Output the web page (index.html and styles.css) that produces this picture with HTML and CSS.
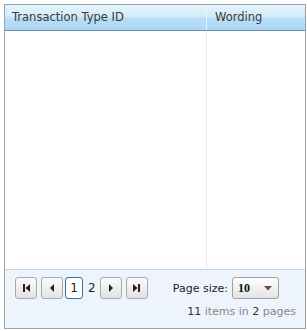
FILE: index.html
```html
<!DOCTYPE html>
<html lang="en">
<head>
  <meta charset="UTF-8" />
  <title>Transaction Types</title>
  <link rel="stylesheet" href="styles.css">
</head>
<body>
  <div class="grid">
    <div class="grid-header">
      <div class="col col-id">Transaction Type ID</div>
      <div class="col col-wording">Wording</div>
    </div>

    <div class="grid-body">
      <div class="col-fill col-id"></div>
      <div class="col-fill col-wording"></div>
    </div>

    <div class="pager">
      <div class="pager-row">
        <div class="pager-nav">
          <span class="pbtn">
            <svg width="9" height="10" viewBox="0 0 9 10"><rect x="1" y="1" width="2" height="8" fill="#222"/><path d="M8 1 L3.5 5 L8 9 Z" fill="#222"/></svg>
          </span>
          <span class="pbtn">
            <svg width="9" height="10" viewBox="0 0 9 10"><path d="M6 1 L2 5 L6 9 Z" fill="#222"/></svg>
          </span>
          <span class="pnum current">1</span>
          <span class="pnum">2</span>
          <span class="pbtn">
            <svg width="9" height="10" viewBox="0 0 9 10"><path d="M3 1 L7 5 L3 9 Z" fill="#222"/></svg>
          </span>
          <span class="pbtn">
            <svg width="9" height="10" viewBox="0 0 9 10"><path d="M1 1 L5.5 5 L1 9 Z" fill="#222"/><rect x="6" y="1" width="2" height="8" fill="#222"/></svg>
          </span>
        </div>
        <div class="page-size">
          <span>Page size:</span>
          <span class="dropdown">
            <span class="dd-value">10</span>
            <svg width="8" height="5" viewBox="0 0 8 5"><path d="M0 0 L8 0 L4 4.5 Z" fill="#555"/></svg>
          </span>
        </div>
      </div>
      <div class="pager-info"><b>11</b> items in <b>2</b> pages</div>
    </div>
  </div>
</body>
</html>
```

FILE: styles.css
```css
body {
  margin: 0;
  padding: 4px;
  font-family: 'DejaVu Sans', Verdana, sans-serif;
  font-size: 11px;
  color: #333;
  background: #fff;
}

.grid {
  width: 300px;
  height: 323px;
  border: 1px solid #97a4ad;
  display: flex;
  flex-direction: column;
}

.grid-header {
  display: flex;
  height: 25px;
  background: linear-gradient(to bottom, #e6f3fc 0%, #d3ebfa 45%, #b9def6 55%, #acd7f4 100%);
  border-bottom: 1px solid #6b8faa;
}

.col {
  line-height: 25px;
  padding-left: 8px;
  font-size: 11.5px;
  color: #3a3a3a;
}

.col-id {
  width: 202px;
  box-sizing: border-box;
}

.col-wording {
  flex: 1;
}

.grid-header .col-id {
  border-right: 1px solid #e9f4fc;
  padding-left: 7px;
}

.grid-body {
  display: flex;
  height: 238px;
  background: #fff;
}

.grid-body .col-id {
  border-right: 1px solid #ececec;
}

.pager {
  flex: 1;
  background: #eef4fb;
  border-top: 1px solid #c5d7e6;
  padding: 7px 11px 0 10px;
}

.pager-row {
  display: flex;
  align-items: center;
}

.pager-nav {
  display: flex;
  align-items: center;
  gap: 4px;
}

.pbtn {
  width: 20px;
  height: 20px;
  border: 1px solid #a9a9a9;
  border-radius: 3px;
  background: linear-gradient(to bottom, #fbfbfb, #e2e2e2);
  display: flex;
  align-items: center;
  justify-content: center;
}

.pnum {
  font-size: 12px;
  color: #222;
  line-height: 20px;
}

.pnum.current {
  box-sizing: border-box;
  width: 18px;
  height: 22px;
  border: 1px solid #3a6f9c;
  border-radius: 3px;
  background: #fff;
  text-align: center;
  margin-left: -2px;
}

.pager-nav .pnum + .pnum {
  margin-left: 1px;
  margin-right: 0;
}

.page-size {
  margin-left: auto;
  display: flex;
  align-items: center;
  gap: 4px;
  color: #222;
  margin-right: 15px;
}

.dropdown {
  border: 1px solid #a0a0a0;
  border-radius: 3px;
  background: linear-gradient(to bottom, #fdfdfd, #e4e4e4);
  display: flex;
  align-items: center;
  justify-content: space-between;
  padding: 0 6px 0 5px;
  box-sizing: border-box;
  width: 47px;
  height: 22px;
}

.dd-value {
  font-family: 'Liberation Serif', serif;
  font-weight: bold;
  font-size: 12px;
  color: #111;
}

.pager-info {
  text-align: right;
  margin-top: 6px;
  margin-right: -2px;
  color: #888;
}

.pager-info b {
  font-weight: normal;
  color: #333;
}
```
